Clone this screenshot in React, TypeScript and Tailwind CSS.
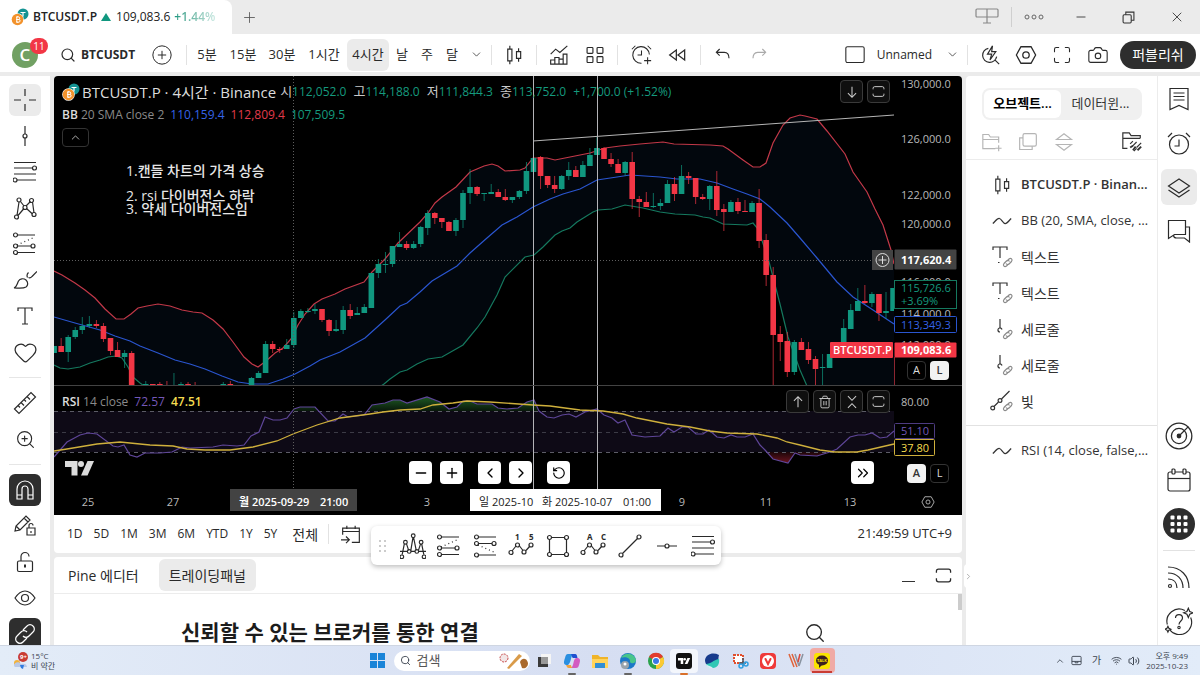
import React from "react";
import {
    Camera,
    ChevronDown,
    ChevronLeft,
    ChevronRight,
    ChevronUp,
    ChevronsRight,
    Heart,
    Maximize,
    Minus,
    Plus,
    RotateCcw,
    Search,
    Trash2,
    Volume2,
    Wifi,
    X,
    ZoomIn,
} from "lucide-react";

const FONT = "font-['Open_Sans','Noto_Sans_CJK_KR',sans-serif]";
const UP = "#10977f";
const DOWN = "#f23645";

/* ---------- icons ---------- */

const Ico = ({ children, size = 24, sw = 1.2 }: { children: React.ReactNode; size?: number; sw?: number }) => (
    <svg width={size} height={size} viewBox="0 0 24 24" fill="none" stroke="currentColor" strokeWidth={sw} aria-hidden="true" className="shrink-0">
        {children}
    </svg>
);

// a small hollow handle used by the drawing-tool icons
const Dot = ({ x, y, r = 2 }: { x: number; y: number; r?: number }) => <circle cx={x} cy={y} r={r} />;

const CrossIcon = () => <Ico><path d="M12 1v7M12 16v7M1 12h7M16 12h7" /></Ico>;
const VLineIcon = () => <Ico><path d="M12 2v8M12 14v8" /><Dot x={12} y={12} /></Ico>;
const FibIcon = () => (
    <Ico>
        <path d="M1 2.500h22M1 8h18.500M1 14h22M4 20h19" />
        <Dot x={21.5} y={8} />
        <Dot x={2} y={20} />
    </Ico>
);
const PatternIcon = () => (
    <Ico>
        <path d="M4 19.500 6 6M7.500 5.500 11 10M13 10l4.500-4.500M19.500 6l1.500 11M5 19.500l6-7M19.500 18 13.500 12.500" />
        <Dot x={6} y={4} />
        <Dot x={18.5} y={4.5} />
        <Dot x={12} y={11.5} />
        <Dot x={3.5} y={21} />
        <Dot x={21} y={18.5} />
    </Ico>
);
const LongIcon = () => (
    <Ico>
        <path d="M4 3h18M4 14h14M4 20.500h18" />
        <path d="M4 13 22 5" strokeDasharray="1 3" />
        <Dot x={2.5} y={3} />
        <Dot x={2.5} y={14} />
        <Dot x={20} y={14} />
        <Dot x={2.5} y={20.5} />
    </Ico>
);
const ShortIcon = () => (
    <Ico>
        <path d="M4 3h18M4 9.500h14M4 21h18" />
        <path d="M4 11l18 8" strokeDasharray="1 3" />
        <Dot x={2.5} y={3} />
        <Dot x={2.5} y={9.5} />
        <Dot x={20} y={9.5} />
        <Dot x={2.5} y={21} />
    </Ico>
);
const BrushIcon = () => (
    <Ico>
        <path d="M1 20c3-1 3-4 4.500-7 1.500-2.500 5-3 7.500-1 2.500 2.500 2 5.500 0 7-3 2-8 1-12 1zM14.500 9.500c-1-2 0-4 1-5M15.500 9.500c2 1 3-.5 4-1.500l4.500-4.500" />
    </Ico>
);
const TextIcon = () => <Ico><path d="M5 7V4h14v3M12 4v16M9 20h6" /></Ico>;
const RulerIcon = () => (
    <Ico>
        <path d="M1.500 18 18 1.500 22.500 6 6 22.500zM5 14.500l2 2M8 11.500l3 3M11 8.500l2 2M14 5.500l3 3" />
    </Ico>
);
const MagnetIcon = () => (
    <Ico>
        <path d="M4 21V11a8 8 0 0 1 16 0v10h-5V11a3 3 0 0 0-6 0v10zM4 17h5M15 17h5" />
    </Ico>
);
const PencilLockIcon = () => (
    <Ico>
        <path d="M2 17l1-5L13 2l4 4L7 16zM11 4l4 4M3 12l4 4M14 14h8v7h-8zM16 14v-2.500a2 2 0 0 1 4 0M18 17v2" />
    </Ico>
);
const UnlockIcon = () => (
    <Ico>
        <rect x="4.500" y="11" width="15" height="10.500" rx="1.500" />
        <path d="M8 11V6.500a4 4 0 0 1 8 0" />
        <path d="M12 14.500v3" strokeWidth={2} />
    </Ico>
);
const EyeIcon = () => (
    <Ico>
        <path d="M2 12c3-4.500 6-7 10-7s7 2.500 10 7c-3 4.500-6 7-10 7s-7-2.500-10-7z" />
        <circle cx="12" cy="12" r="3.500" />
    </Ico>
);
const LinkIcon = () => (
    <Ico sw={1.2}>
        <path d="M10 8l4-4a4 4 0 0 1 6 0 4 4 0 0 1 0 6l-4 4a4 4 0 0 1-6 0M14 16l-4 4a4 4 0 0 1-6 0 4 4 0 0 1 0-6l4-4a4 4 0 0 1 6 0" />
    </Ico>
);
const CandlesIcon = () => (
    <Ico size={20} sw={1.4}>
        <path d="M4.500 5h5v14h-5zM7 1v4M7 19v4M15 8h5v8h-5zM17.500 4v4M17.500 16v4" />
    </Ico>
);
const IndicatorsIcon = () => (
    <Ico size={20} sw={1.4}>
        <path d="M2 23v-5h5v5zM7 23v-8h5v8zM12 23v-6h5v6zM17 23V11h4.500v12zM2 11l6-6 5 4 9-8" />
    </Ico>
);
const GridIcon = () => (
    <Ico size={20} sw={1.4}>
        <rect x="2.500" y="3" width="7" height="7" rx="1" />
        <rect x="14.500" y="3" width="7" height="7" rx="1" />
        <rect x="2.500" y="14" width="7" height="7" rx="1" />
        <rect x="14.500" y="14" width="7" height="7" rx="1" />
    </Ico>
);
const ClockIcon = ({ plus = false, size = 24 }: { plus?: boolean; size?: number }) => (
    <Ico size={size}>
        {plus ? (
            <path d="M21 12a9.500 9.500 0 1 0-9 10M19 15v8M15 19h8M7.500 12.500H12V7.500" />
        ) : (
            <>
                <circle cx="12" cy="13.500" r="9.500" />
                <path d="M7.500 15H12V8.500" />
            </>
        )}
        <path d="M1 6l4-4M23 6l-4-4" />
    </Ico>
);
const RewindIcon = () => <Ico size={20} sw={1.5}><path d="M10 6v12l-8-6zM20 6v12l-8-6z" /></Ico>;
const UndoIcon = () => <Ico size={16} sw={1.7}><path d="M7 3 2 8l5 5M2 8h12c5 0 7 4 7 9" /></Ico>;
const RedoIcon = () => <Ico size={16} sw={1.7}><path d="M17 3l5 5-5 5M22 8H10c-5 0-7 4-7 9" /></Ico>;
const QuickSearchIcon = () => (
    <Ico size={20} sw={1.4}>
        <path d="M10 4a8.500 8.500 0 1 0 10 10M17.500 17.500 23 23M15 1 9 11h5l-2 7 7-10h-5z" />
    </Ico>
);
const HexIcon = ({ size = 22 }: { size?: number }) => (
    <Ico size={size} sw={1.4}>
        <path d="M1.500 12 6.500 3h11l5 9-5 9h-11z" />
        <circle cx="12" cy="12" r="3.500" />
    </Ico>
);
const FullIcon = ({ size = 14 }: { size?: number }) => (
    <Ico size={size} sw={1.8}>
        <path d="M2 8V6a3 3 0 0 1 3-3h14a3 3 0 0 1 3 3v2M2 16v2a3 3 0 0 0 3 3h14a3 3 0 0 0 3-3v-2" />
    </Ico>
);
const WaveIcon = () => <Ico size={20} sw={1.5}><path d="M1 15c4-4 6-7 8-6 3 1 4 6 7 6 2 0 4-3 7-6" /></Ico>;
const LayersIcon = () => <Ico><path d="M12 4 1.500 11 12 18l10.500-7zM1.500 15 12 22l10.500-7" /></Ico>;
const NotesIcon = () => <Ico><path d="M3 1.500h18v21l-9-4-9 4zM6.500 6h11M6.500 9.500h11M6.500 13h11" /></Ico>;
const ChatIcon = () => (
    <Ico><path d="M1.500 1.500h17v14h-11l-6 4zM18.500 8h4v15l-5-4h-8c-2 0-3-1-3-3" /></Ico>
);
const RadarIcon = () => (
    <Ico size={28} sw={1.1}>
        <circle cx="12" cy="12" r="11" />
        <circle cx="12" cy="12" r="6.500" />
        <path d="m12 12 8-8" />
        <circle cx="12" cy="12" r="1.500" fill="currentColor" />
    </Ico>
);
const CalendarIcon = () => (
    <Ico>
        <rect x="1" y="4" width="22" height="19" rx="2" />
        <path d="M1 10.500h22" />
        <rect x="5" y="1" width="3" height="5" rx="1" className="fill-white" />
        <rect x="16" y="1" width="3" height="5" rx="1" className="fill-white" />
    </Ico>
);
const GotoIcon = () => (
    <Ico size={20} sw={1.4}><path d="M2 13V5h20v17h-9M2 9h20M7 2v4M17 2v4M0 19h10M6 15l4 4-4 4" /></Ico>
);
const FeedIcon = () => (
    <Ico>
        <circle cx="3" cy="21" r="1.500" />
        <path d="M1 14c6 0 9 4 9 9M1 8c9 0 15 6 15 15M1 2c13 0 21 9 21 21" />
    </Ico>
);
const HelpIcon = () => (
    <Ico size={28} sw={1}>
        <path d="M17 3A10.500 10.500 0 0 0 2 15M4 19.500A10.500 10.500 0 0 0 22 9M20 1l1.200 2.800L24 5l-2.800 1.200L20 9l-1.200-2.800L16 5l2.800-1.200zM2.500 16.500l.8 1.700 1.700.8-1.700.8-.8 1.700-.8-1.700L0 19l1.700-.8z" />
        <path d="M9 9.500c0-4 6-4 6 0 0 2.500-3 2.500-3 5.500" />
        <circle cx="12" cy="17.500" r="1" />
    </Ico>
);
const ElliottIcon = ({ a, b }: { a: string; b: string }) => (
    <svg width="28" height="30" viewBox="0 0 28 30" fill="none" stroke="currentColor" strokeWidth="1.200" aria-hidden="true" className="overflow-visible">
        <path d="m4 20 4-5M11.500 15l3.500 4.500M18 19.500l4-4.500" />
        <Dot x={3} y={21.5} />
        <Dot x={9.5} y={14} />
        <Dot x={16} y={21} />
        <Dot x={23} y={14} />
        <text x="7" y="9" className="text-[8px] font-bold" fill="currentColor" stroke="none">{a}</text>
        <text x="21" y="9" className="text-[8px] font-bold" fill="currentColor" stroke="none">{b}</text>
    </svg>
);
const HeadShouldersIcon = () => (
    <Ico size={26} sw={1.1}>
        <path d="M2 20 4 10M6 10l2 6M10 16l2-12M12.500 4l2.500 12M17 16l2-6M20 10l2 10M0 17h7M10 17h4M17 17h7" />
        <Dot x={1.7} y={22} r={1.7} />
        <Dot x={5} y={8.5} r={1.7} />
        <Dot x={8.5} y={17} r={1.7} />
        <Dot x={12.2} y={2.5} r={1.7} />
        <Dot x={15.5} y={17} r={1.7} />
        <Dot x={19.5} y={8.5} r={1.7} />
        <Dot x={22.2} y={22} r={1.7} />
    </Ico>
);
const RectIcon = () => (
    <Ico>
        <path d="M5 3.500h14M5 20.500h14M3.500 5v14M20.500 5v14" />
        <Dot x={3.5} y={3.5} />
        <Dot x={20.5} y={3.5} />
        <Dot x={3.5} y={20.5} />
        <Dot x={20.5} y={20.5} />
    </Ico>
);
const TrendIcon = () => <Ico><path d="M4.500 19.500l15-15" /><Dot x={3} y={21} /><Dot x={21} y={3} /></Ico>;
const HLineIcon = () => <Ico><path d="M2 12h8M14 12h8" /><Dot x={12} y={12} /></Ico>;

const PairLogo = () => (
    <svg width="18" height="18" viewBox="0 0 18 18" aria-hidden="true" className="shrink-0">
        <circle cx="12" cy="6" r="5.500" fill="#149393" />
        <path d="M9.500 4.500h5M12 4.500v4" stroke="#fff" strokeWidth="1.200" />
        <circle cx="6.500" cy="11.500" r="6.300" className="fill-white" />
        <circle cx="6.500" cy="11.500" r="5.800" fill="#f2922c" />
        <path d="M5 9h2.500a1.200 1.200 0 0 1 0 2.500H5.500h2.300a1.300 1.300 0 0 1 0 2.600H5M5.800 9v5M6.800 8v1M6.800 14v1" fill="none" stroke="#fff" strokeWidth="1" />
    </svg>
);

// placed with its top left corner at the origin, 29 x 14
const TvMark = () => (
    <>
        <path d="M0 0h12.500v14.500h-6V6H0z" />
        <circle cx="16" cy="3" r="3" />
        <path d="M22.500 0H29l-6.500 14.500H16z" />
    </>
);

/* ---------- chart data ---------- */

const STEP = 7.05;
const X0 = 533.5;

// [bar index, up?, body top, body bottom, high, low] in chart units
const CANDLES: [number, number, number, number, number, number][] = [
    [-68, 1, 346, 353, 346, 353], [-67, 0, 346, 352, 338, 352], [-66, 1, 337, 352, 335, 362], [-65, 1, 330, 337, 327, 339],
    [-64, 1, 326, 330, 317, 334], [-63, 1, 324, 326, 316, 328], [-62, 0, 324, 326, 320, 328], [-61, 0, 326, 339, 323, 342],
    [-60, 0, 338, 351, 338, 355], [-59, 0, 350, 357, 342, 357], [-58, 1, 353, 357, 350, 368], [-57, 0, 353, 385, 351, 385],
    [-55, 1, 384, 385, 381, 385], [-54, 0, 384, 385, 384, 385], [-53, 0, 384, 385, 382, 385], [-52, 0, 385, 385, 381, 385],
    [-51, 1, 385, 385, 373, 385], [-50, 1, 384, 385, 382, 385], [-49, 0, 384, 385, 382, 385], [-48, 0, 385, 385, 382, 385],
    [-44, 1, 384, 385, 382, 385], [-43, 0, 384, 385, 381, 385], [-40, 1, 378, 385, 377, 385], [-39, 1, 373, 378, 371, 378],
    [-38, 1, 344, 373, 341, 373], [-37, 0, 344, 349, 341, 353], [-36, 0, 349, 350, 347, 353], [-35, 1, 345, 349, 339, 349],
    [-34, 1, 318, 345, 312, 348], [-33, 1, 311, 318, 309, 318], [-32, 1, 311, 312, 308, 313], [-31, 1, 309, 311, 304, 314],
    [-30, 0, 309, 320, 309, 322], [-29, 0, 320, 331, 319, 336], [-28, 1, 329, 331, 320, 332], [-27, 1, 310, 330, 306, 334],
    [-26, 0, 310, 316, 304, 319], [-25, 1, 313, 315, 307, 315], [-24, 1, 307, 313, 304, 313], [-23, 1, 273, 308, 273, 308],
    [-22, 1, 264, 273, 259, 278], [-21, 1, 264, 265, 252, 273], [-20, 1, 246, 264, 246, 267], [-19, 1, 244, 247, 232, 247],
    [-18, 0, 244, 248, 241, 250], [-17, 1, 244, 248, 241, 249], [-16, 1, 227, 244, 226, 247], [-15, 1, 213, 228, 210, 235],
    [-14, 0, 213, 218, 212, 224], [-13, 0, 218, 222, 218, 228], [-12, 0, 222, 231, 221, 231], [-11, 1, 220, 231, 218, 236],
    [-10, 1, 193, 220, 190, 228], [-9, 1, 187, 193, 169, 204], [-8, 0, 187, 194, 186, 196], [-7, 1, 193, 194, 193, 201],
    [-6, 1, 192, 194, 184, 194], [-5, 0, 192, 197, 189, 197], [-4, 0, 197, 200, 189, 201], [-3, 1, 197, 200, 197, 203],
    [-2, 1, 191, 197, 190, 199], [-1, 1, 171, 191, 162, 194], [0, 1, 158, 172, 141, 172], [1, 0, 157, 176, 156, 189],
    [2, 0, 176, 185, 176, 188], [3, 0, 185, 189, 176, 193], [4, 1, 176, 189, 175, 190], [5, 1, 170, 176, 162, 180],
    [6, 0, 170, 177, 166, 177], [7, 1, 165, 177, 161, 177], [8, 1, 155, 166, 148, 166], [9, 1, 148, 155, 137, 155],
    [10, 0, 148, 159, 147, 159], [11, 0, 159, 164, 153, 167], [12, 0, 164, 173, 159, 173], [13, 1, 162, 173, 161, 176],
    [14, 0, 162, 199, 152, 209], [15, 0, 199, 202, 196, 217], [16, 0, 202, 207, 192, 207], [17, 1, 206, 207, 193, 208],
    [18, 1, 203, 206, 199, 210], [19, 1, 184, 203, 180, 203], [20, 0, 184, 194, 177, 201], [21, 1, 176, 194, 165, 194],
    [22, 0, 176, 178, 172, 184], [23, 0, 178, 197, 178, 204], [24, 0, 197, 199, 194, 200], [25, 1, 186, 199, 185, 210],
    [26, 0, 186, 210, 171, 216], [27, 0, 209, 212, 204, 231], [28, 1, 202, 212, 200, 212], [29, 0, 202, 211, 198, 214],
    [30, 0, 211, 212, 200, 212], [31, 1, 203, 212, 201, 212], [32, 0, 203, 241, 189, 248], [33, 0, 240, 275, 234, 286],
    [34, 0, 275, 335, 267, 385], [35, 0, 334, 342, 326, 361], [36, 0, 341, 372, 332, 377], [37, 1, 342, 372, 340, 375],
    [38, 0, 342, 350, 338, 350], [39, 0, 349, 360, 342, 364], [40, 0, 359, 369, 356, 385], [41, 1, 367, 368, 354, 385],
    [42, 1, 354, 368, 354, 368], [43, 1, 342, 354, 342, 358], [44, 1, 328, 342, 319, 342], [45, 1, 310, 329, 304, 329],
    [46, 1, 301, 311, 288, 311], [47, 0, 301, 303, 285, 304], [48, 1, 294, 303, 292, 307], [49, 0, 294, 313, 294, 321],
    [50, 1, 311, 313, 292, 319], [51, 1, 288, 311, 288, 311],
];

const UPPER =
    "54,271 62,275 75,283 85,290 95,298 105,309 116,319 124,319 131,314 138,308 147,306 158,304 170,306 182,310 193,312 202,313 213,320 223,329 233,342 244,357 252,364 258,367 266,361 275,353 283,348 291,339 298,325 305,314 314,304 322,299 335,294 345,289 364,282 372,272 385,259 398,243 420,222 428,213 435,203 442,197 456,187 470,172 484,166 492,164 498,166 505,171 520,170 525,168 533,158 547,158 555,160 570,157 590,153 605,148 620,146 640,144 663,142 674,144 710,145 723,146 728,149 743,160 753,167 760,167 766,163 773,143 783,125 790,118 800,115 805,116 817,119 827,131 845,154 853,172 867,192 875,209 883,225 891,250 894,264";
const MIDDLE =
    "54,317 75,323 100,330 115,336 130,341 140,346 158,353 175,360 190,364 205,369 222,376 238,382 252,384 268,384 283,379 295,374 310,366 320,360 340,352 365,338 385,320 400,306 407,303 420,292 432,281 457,266 470,253 487,238 502,225 517,217 533,207 550,199 563,194 580,189 597,180 617,177 630,175 660,177 677,179 700,179 717,183 733,189 747,194 760,199 770,207 787,223 800,238 817,258 837,282 853,297 870,308 894,324";
const LOWER =
    "54,365 60,368 68,369 80,367 90,363 100,360 108,357 116,356 122,358 128,367 133,377 140,383 150,390 372,392 384,384 390,379 400,372 407,370 417,364 428,359 442,357 463,345 477,328 485,317 497,295 505,277 525,257 534,255 543,247 555,235 562,231 570,228 577,222 593,212 598,210 612,209 625,205 643,208 660,212 675,214 695,215 703,217 710,218 723,224 747,225 753,223 758,229 768,258 773,277 780,304 788,337 800,370 807,386 820,400 894,410";
const RSI =
    "54,457 61,449 67,442 80,435 88,433 97,434 113,446 118,447 124,445 130,455 137,457 145,453 160,453 172,452 182,447 190,448 213,447 223,445 237,446 244,445 251,436 259,432 265,417 273,420 280,420 287,418 294,409 300,407 315,407 328,421 335,421 343,414 348,417 364,415 372,405 385,403 393,400 400,400 407,403 427,397 440,402 449,409 457,407 463,401 470,401 477,404 492,404 498,408 507,409 518,408 527,402 534,400 539,411 547,417 554,418 562,415 569,414 576,417 585,412 597,409 604,415 612,418 618,423 625,420 632,435 645,437 660,436 668,428 674,432 682,427 688,427 696,434 703,434 709,430 717,437 724,438 731,435 737,437 745,437 753,434 760,445 765,450 773,459 788,463 795,453 800,455 817,456 830,452 837,449 850,437 858,435 865,435 872,433 880,438 887,437 894,431";
const RSI_MA =
    "54,451 67,449 97,444 120,442 150,445 173,446 187,449 205,450 230,450 253,447 277,441 293,434 317,425 340,418 370,414 383,412 400,410 420,409 433,405 453,403 467,401 490,402 533,405 550,406 580,410 603,411 623,414 637,418 667,424 690,427 710,431 727,433 757,434 777,438 787,442 800,445 820,450 835,452 857,452 868,450 894,444";

const PRICE_TICKS = [
    { y: 84, label: "130,000.0" },
    { y: 139, label: "126,000.0" },
    { y: 195, label: "122,000.0" },
    { y: 224, label: "120,000.0" },
    { y: 282, label: "116,000.0" },
    { y: 314, label: "114,000.0" },
    { y: 345, label: "112,000.0" },
];

const DAY_TICKS = [
    { x: 88, label: "25" },
    { x: 173, label: "27" },
    { x: 427, label: "3" },
    { x: 682, label: "9" },
    { x: 766, label: "11" },
    { x: 850, label: "13" },
];

type TagProps = { x?: number; y: number; w?: number; h: number; fill: string; stroke?: string; color: string; label: string; bold?: boolean };
const Tag = ({ x = 894, y, w = 63, h, fill, stroke = "none", color, label, bold }: TagProps) => (
    <g>
        <rect x={x + 0.5} y={y + 0.5} width={w - 1} height={h - 1} rx="1" fill={fill} stroke={stroke} />
        <text x={x + 7} y={y + h / 2 + 4} fill={color} className={bold ? "text-[11px] font-bold" : "text-[11px]"}>
            {label}
        </text>
    </g>
);

const PlotCanvas = () => (
    <svg viewBox="54 76 908 439" preserveAspectRatio="xMinYMin meet" className={`block h-full w-full ${FONT}`} role="img" aria-label="BTCUSDT.P 4시간">
        <defs>
            <clipPath id="price"><rect x="54" y="76" width="840" height="309" /></clipPath>
            <clipPath id="over"><rect x="54" y="386" width="840" height="25" /></clipPath>
            <clipPath id="under"><rect x="700" y="452" width="194" height="37" /></clipPath>
            <linearGradient id="overFill" gradientUnits="userSpaceOnUse" x1="0" y1="396" x2="0" y2="411">
                <stop offset="0" stopColor="#205f26" />
                <stop offset="1" stopColor="#08170a" />
            </linearGradient>
            <linearGradient id="underFill" gradientUnits="userSpaceOnUse" x1="0" y1="452" x2="0" y2="463">
                <stop offset="0" stopColor="#1c0609" />
                <stop offset="1" stopColor="#6a131e" />
            </linearGradient>
        </defs>

        <g clipPath="url(#price)">
            <polygon points={`${UPPER} ${LOWER.split(" ").reverse().join(" ")}`} fill="#02070d" />
            <g fill="none" strokeWidth="1.200">
                <polyline points={UPPER} stroke="#c23848" />
                <polyline points={LOWER} stroke="#15795f" />
                <polyline points={MIDDLE} stroke="#2a55cf" />
            </g>
            {CANDLES.map(([k, up, top, bottom, high, low]) => {
                const x = X0 + k * STEP;
                const color = up ? UP : DOWN;
                return (
                    <g key={k} fill={color}>
                        <rect x={x - 0.5} y={high} width="1" height={low - high} opacity="0.7" />
                        <rect x={x - 2.8} y={top} width="5.600" height={Math.max(bottom - top, 1)} />
                    </g>
                );
            })}
            <path d="M533 141 894 115" stroke="#b5b5b5" fill="none" />
        </g>

        <rect x="54" y="411" width="840" height="41" fill="#0e0a16" />
        <polygon clipPath="url(#over)" points={`54,411 ${RSI} 894,411`} fill="url(#overFill)" />
        <polygon clipPath="url(#under)" points={`54,452 ${RSI} 894,452`} fill="url(#underFill)" />
        <g stroke="#5c5c66" strokeDasharray="4 4">
            <path d="M54 411.500H894" />
            <path d="M54 432.500H894" opacity="0.6" />
            <path d="M54 452.500H894" />
        </g>
        <polyline points={RSI} fill="none" stroke="#5f4699" strokeWidth="1.200" />
        <polyline points={RSI_MA} fill="none" stroke="#cfb03c" strokeWidth="1.300" />

        <g stroke="#5e5e5e" strokeDasharray="1 2">
            <path d="M293.500 76V489" />
            <path d="M54 260.500H872" />
        </g>
        <path d="M533.500 76V489M597.500 76V489" stroke="#b4b4b8" />
        <path d="M54 385.500H962" stroke="#434343" />
        <path d="M894.500 357V385" stroke="#8c2530" />

        {PRICE_TICKS.map((t) => (
            <text key={t.label} x="901" y={t.y + 4} fill="#b9b9b9" className="text-[11px]">{t.label}</text>
        ))}
        <Tag y={249} h={21} fill="#434343" color="#fff" label="117,620.4" bold />
        <rect x="872" y="250" width="21" height="20" fill="#434343" />
        <path d="M882.500 256v8M878.500 260h8" stroke="#ddd" />
        <circle cx="882.500" cy="260" r="6.500" stroke="#ddd" fill="none" />
        <g>
            <rect x="894.500" y="280.500" width="62" height="28" fill="#000" stroke="#15795f" />
            <text x="901" y="292" fill="#159a7e" className="text-[11px]">115,726.6</text>
            <text x="901" y="305" fill="#159a7e" className="text-[11px]">+3.69%</text>
        </g>
        <Tag y={316} h={17} fill="#000" stroke="#2a55cf" color="#3563e8" label="113,349.3" />
        <rect x="830" y="342" width="63" height="16" rx="1" fill={DOWN} />
        <text x="833" y="354" fill="#fff" className="text-[11px] font-semibold">BTCUSDT.P</text>
        <Tag y={342} h={16} fill={DOWN} color="#fff" label="109,083.6" bold />
        <text x="901" y="406" fill="#b9b9b9" className="text-[11px]">80.00</text>
        <Tag y={423} w={41} h={16} fill="#000" stroke="#4d3b80" color="#7458b8" label="51.10" />
        <Tag y={439} w={41} h={17} fill="#000" stroke="#cfb03c" color="#f5dc4f" label="37.80" />

        <g transform="translate(65 461)" fill="#dcdcdc"><TvMark /></g>

        {DAY_TICKS.map((t) => (
            <text key={t.label} x={t.x} y="506" textAnchor="middle" fill="#b9b9b9" className="text-[11px]">{t.label}</text>
        ))}
        <rect x="230" y="489" width="127" height="22" fill="#434343" />
        <text x="239" y="506" fill="#fff" className="text-[11px] font-semibold">월 2025-09-29</text>
        <text x="320" y="506" fill="#fff" className="text-[11px] font-semibold">21:00</text>
        <rect x="470" y="489" width="191" height="22" fill="#fff" />
        <text x="479" y="506" fill="#222" className="text-[11px]">일 2025-10</text>
        <text x="542" y="506" fill="#222" className="text-[11px]">화 2025-10-07</text>
        <text x="623" y="506" fill="#222" className="text-[11px]">01:00</text>
    </svg>
);

/* ---------- shell pieces ---------- */

const Divider = () => <span className="mx-1 h-5 w-px shrink-0 bg-[#e2e2e2]" />;

const BarButton = ({ label, width, children }: { label: string; width: string; children: React.ReactNode }) => (
    <button aria-label={label} className={`flex h-8 shrink-0 items-center justify-center rounded-md ${width}`}>
        {children}
    </button>
);

const TitleBar = () => (
    <header className="flex h-[34px] shrink-0 items-center bg-[#ebebeb] text-[#555]">
        <div className="flex h-full w-[232px] items-center gap-1 rounded-tr-lg bg-white pl-[11px] text-[12px] text-[#222]">
            <PairLogo />
            <span className="font-semibold">BTCUSDT.P</span>
            <svg width="10" height="8" viewBox="0 0 10 8" aria-hidden="true"><path d="M5 0l5 8H0z" fill={UP} /></svg>
            <span className="ml-px">109,083.6</span>
            <span className="bg-gradient-to-r from-[#10977f] to-[#c5e6df] bg-clip-text font-semibold text-transparent">+1.44%</span>
        </div>
        <button aria-label="새 탭" className="ml-2 flex size-[18px] items-center justify-center"><Plus size={17} strokeWidth={1.2} /></button>
        <div className="ml-auto flex items-center text-[#333]">
            <button aria-label="레이아웃" className="text-[#888]">
                <Ico><rect x="1" y="4" width="22" height="8" rx="1" /><path d="M12 4v14M8 18h8" /></Ico>
            </button>
            <span className="mx-3 h-5 w-px bg-[#cfcfcf]" />
            <button aria-label="메뉴" className="w-5">
                <svg width="20" height="6" viewBox="0 0 20 6" fill="none" stroke="#666" aria-hidden="true">
                    <circle cx="3" cy="3" r="2" /><circle cx="10" cy="3" r="2" /><circle cx="17" cy="3" r="2" />
                </svg>
            </button>
            <button aria-label="최소화" className="flex w-[74px] justify-center"><Minus size={14} strokeWidth={1.5} /></button>
            <button aria-label="복원" className="flex w-[20px] justify-center">
                <Ico size={13} sw={2}><rect x="2" y="7" width="15" height="15" rx="2" /><path d="M7 7V2h15v15h-5" /></Ico>
            </button>
            <button aria-label="닫기" className="ml-4 flex w-[46px] justify-center"><X size={16} strokeWidth={1.3} /></button>
        </div>
    </header>
);

const INTERVALS = [
    { label: "5분", width: "w-8" },
    { label: "15분", width: "w-10" },
    { label: "30분", width: "w-[38px]" },
    { label: "1시간", width: "w-[46px]" },
    { label: "4시간", width: "w-[42px] bg-[#ebebeb]" },
    { label: "날", width: "w-[26px]" },
    { label: "주", width: "w-[24px]" },
    { label: "달", width: "w-[26px]" },
];

const TopToolbar = () => (
    <div className="mb-1 flex h-[38px] shrink-0 items-center bg-white pt-[3px] text-[13px] text-[#2a2a2a]">
        <div className="relative ml-3 size-[26px] shrink-0 rounded-full bg-[#71a063] text-center text-[17px] leading-[25px] font-semibold text-white">
            C
            <span className="absolute -top-1 left-[18px] h-4 w-[18px] rounded-full bg-[#f23645] text-[10px] leading-4 font-normal">11</span>
        </div>
        <button className="ml-[22px] flex w-[82px] items-center gap-[5px] text-[12px] font-bold"><Search size={16} strokeWidth={1.8} className="shrink-0" />BTCUSDT</button>
        <BarButton label="심볼 비교" width="w-10">
            <Ico size={20}><circle cx="12" cy="12" r="11" /><path d="M12 7v10M7 12h10" /></Ico>
        </BarButton>
        <Divider />
        {INTERVALS.map((i) => (
            <button key={i.label} className={`h-8 shrink-0 rounded-md text-[13px] ${i.width}`}>{i.label}</button>
        ))}
        <BarButton label="인터벌 더보기" width="w-[22px]"><ChevronDown size={13} strokeWidth={1.4} /></BarButton>
        <Divider />
        <BarButton label="캔들" width="w-9"><CandlesIcon /></BarButton>
        <Divider />
        <BarButton label="지표" width="w-9"><IndicatorsIcon /></BarButton>
        <BarButton label="템플릿" width="w-9"><GridIcon /></BarButton>
        <Divider />
        <BarButton label="알림" width="w-[38px]"><ClockIcon plus size={21} /></BarButton>
        <BarButton label="리플레이" width="w-9"><RewindIcon /></BarButton>
        <Divider />
        <BarButton label="실행 취소" width="w-9"><UndoIcon /></BarButton>
        <BarButton label="다시 실행" width="w-9"><span className="text-[#aaa]"><RedoIcon /></span></BarButton>

        <div className="ml-auto flex items-center">
            <BarButton label="레이아웃" width="w-9"><Ico size={20} sw={1.3}><rect x="1" y="2" width="22" height="19" rx="2" /></Ico></BarButton>
            <button className="ml-1 flex items-center gap-[14px] text-[12px] font-medium">Unnamed <ChevronDown size={13} strokeWidth={1.4} /></button>
            <span className="mr-1 ml-2 h-5 w-px bg-[#e2e2e2]" />
            <BarButton label="빠른 검색" width="w-9"><QuickSearchIcon /></BarButton>
            <BarButton label="설정" width="w-9"><HexIcon /></BarButton>
            <BarButton label="전체 화면" width="w-9"><Maximize size={20} strokeWidth={1.3} /></BarButton>
            <BarButton label="스냅샷" width="w-9"><Camera size={22} strokeWidth={1.2} /></BarButton>
            <button className="mr-1 ml-1 h-7 w-[76px] rounded-full bg-[#2e2e2e] text-[14px] text-white">퍼블리쉬</button>
        </div>
    </div>
);

const TOOLS = [
    { label: "십자선", icon: <CrossIcon />, cls: "bg-[#ebebeb]" },
    { label: "추세선", icon: <VLineIcon />, cls: "" },
    { label: "피보나치", icon: <FibIcon />, cls: "" },
    { label: "패턴", icon: <PatternIcon />, cls: "" },
    { label: "예측", icon: <LongIcon />, cls: "" },
    { label: "브러쉬", icon: <BrushIcon />, cls: "" },
    { label: "문자", icon: <TextIcon />, cls: "" },
    { label: "아이콘", icon: <Heart size={25} strokeWidth={1.2} />, cls: "" },
    null,
    { label: "측정", icon: <RulerIcon />, cls: "" },
    { label: "확대", icon: <ZoomIn size={21} strokeWidth={1.3} />, cls: "" },
    null,
    { label: "자석", icon: <MagnetIcon />, cls: "bg-[#2e2e2e] text-white" },
    { label: "드로잉 모드", icon: <PencilLockIcon />, cls: "" },
    { label: "잠금", icon: <UnlockIcon />, cls: "" },
    { label: "숨기기", icon: <EyeIcon />, cls: "" },
    { label: "링크", icon: <LinkIcon />, cls: "bg-[#2e2e2e] text-white" },
];

const DrawingBar = () => (
    <nav className="flex w-[50px] shrink-0 flex-col items-center gap-1 overflow-hidden bg-white pt-2 text-[#2a2a2a]">
        {TOOLS.map((t, i) =>
            t ? (
                <button key={t.label} aria-label={t.label} className={`flex size-8 shrink-0 items-center justify-center rounded-md ${t.cls}`}>
                    {t.icon}
                </button>
            ) : (
                <span key={i} className="my-[5px] h-px w-8 shrink-0 bg-[#e6e6e6]" />
            ),
        )}
    </nav>
);

const OHLC = [
    ["시", "112,052.0"],
    ["고", "114,188.0"],
    ["저", "111,844.3"],
    ["종", "113,752.0"],
];

const PaneButton = ({ label, children }: { label: string; children: React.ReactNode }) => (
    <button aria-label={label} className="flex size-[23px] items-center justify-center rounded border border-[#3a3a3a] bg-[#0f0f0f] text-[#ccc]">
        {children}
    </button>
);

const WhiteButton = ({ label, children }: { label: string; children: React.ReactNode }) => (
    <button aria-label={label} className="flex size-[23px] items-center justify-center rounded bg-white text-black">
        {children}
    </button>
);

const ScaleButtons = ({ active }: { active: "A" | "L" }) => (
    <div className="flex gap-1 text-[11px]">
        {["A", "L"].map((s) => (
            <button key={s} className={s === active ? "size-[19px] rounded bg-[#f2f2f2] font-semibold text-[#333]" : "size-[19px] rounded border border-[#333] text-[#ddd]"}>
                {s}
            </button>
        ))}
    </div>
);

const ChartArea = () => (
    <section className="relative min-h-0 flex-1 overflow-hidden rounded-t bg-black">
        <PlotCanvas />

        <div className="absolute top-[6px] left-2 text-[12px] text-[#c9c9c9]">
            <div className="flex h-5 items-center whitespace-nowrap">
                <PairLogo />
                <h1 className="ml-[2px] text-[15px] text-[#dcdcdc]">BTCUSDT.P · 4시간 · Binance</h1>
                <p className="ml-1 flex gap-[7px] text-[12px] text-[#159a7e]">
                    {OHLC.map(([k, v]) => (
                        <span key={k}><span className="text-[13px] text-[#c9c9c9]">{k}</span>{v}</span>
                    ))}
                    <span className="self-center">+1,700.0 (+1.52%)</span>
                </p>
            </div>
            <p className="mt-1 flex gap-[6px] leading-[18px]">
                <span className="text-[#8a8a8a]"><b className="font-semibold text-[#dcdcdc]">BB</b> 20 SMA close 2</span>
                <span className="text-[#3563e8]">110,159.4</span>
                <span className="text-[#e03a4a]">112,809.4</span>
                <span className="text-[#159a7e]">107,509.5</span>
            </p>
            <button aria-label="접기" className="mt-1 flex h-[19px] w-[27px] items-center justify-center rounded border border-[#333]">
                <ChevronUp size={13} strokeWidth={1.6} />
            </button>
        </div>

        <div className="absolute top-[88px] left-[72px] text-[14px] leading-[13px] font-medium text-[#e6e6e6]">
            <p className="mb-3">1.캔들 차트의 가격 상승</p>
            <p>2. rsi 다이버전스 하락</p>
            <p>3. 약세 다이버전스임</p>
        </div>

        <div className="absolute top-1 right-[72px] flex gap-1">
            <PaneButton label="아래로"><Ico size={14} sw={1.8}><path d="M12 3v18M5 14l7 7 7-7" /></Ico></PaneButton>
            <PaneButton label="최대화"><FullIcon size={13} /></PaneButton>
        </div>

        <p className="absolute top-[317px] left-2 flex gap-[6px] text-[12px] leading-[18px]">
            <span className="text-[#8a8a8a]"><b className="font-semibold text-[#dcdcdc]">RSI</b> 14 close</span>
            <span className="text-[#7458b8]">72.57</span>
            <span className="font-semibold text-[#f5dc4f]">47.51</span>
        </p>
        <div className="absolute top-[314px] right-[72px] flex gap-1">
            <PaneButton label="위로"><Ico size={14} sw={1.8}><path d="M12 21V3M5 10l7-7 7 7" /></Ico></PaneButton>
            <PaneButton label="삭제"><Trash2 size={14} strokeWidth={1.6} /></PaneButton>
            <PaneButton label="접기"><Ico size={14} sw={1.8}><path d="M5 2l7 7 7-7M5 22l7-7 7 7" /></Ico></PaneButton>
            <PaneButton label="최대화"><FullIcon size={13} /></PaneButton>
        </div>

        <div className="absolute top-[285px] right-[13px]"><ScaleButtons active="L" /></div>
        <div className="absolute top-[388px] right-[13px]"><ScaleButtons active="A" /></div>

        <div className="absolute top-[385px] left-[355px] flex gap-[15px]">
            <div className="flex gap-2">
                <WhiteButton label="축소"><Minus size={16} /></WhiteButton>
                <WhiteButton label="확대"><Plus size={16} /></WhiteButton>
            </div>
            <div className="flex gap-2">
                <WhiteButton label="왼쪽"><ChevronLeft size={16} /></WhiteButton>
                <WhiteButton label="오른쪽"><ChevronRight size={16} /></WhiteButton>
            </div>
            <WhiteButton label="초기화"><RotateCcw size={14} /></WhiteButton>
        </div>
        <div className="absolute top-[385px] right-[88px]"><WhiteButton label="최근 바로 이동"><ChevronsRight size={18} strokeWidth={1.6} /></WhiteButton></div>
        <button aria-label="시간축 설정" className="absolute right-[27px] bottom-[6px] text-[#ccc]"><HexIcon size={14} /></button>
    </section>
);

const RANGES = ["1D", "5D", "1M", "3M", "6M", "YTD", "1Y", "5Y"];

const FAVOURITES = [
    { label: "헤드앤숄더", icon: <HeadShouldersIcon /> },
    { label: "롱 포지션", icon: <LongIcon /> },
    { label: "숏 포지션", icon: <ShortIcon /> },
    { label: "엘리엇 임펄스", icon: <ElliottIcon a="1" b="5" /> },
    { label: "네모", icon: <RectIcon /> },
    { label: "엘리엇 조정", icon: <ElliottIcon a="A" b="C" /> },
    { label: "빗", icon: <TrendIcon /> },
    { label: "가로줄", icon: <HLineIcon /> },
    { label: "되돌림", icon: <FibIcon /> },
];

const RangeBar = () => (
    <div className="relative flex h-[38px] shrink-0 items-center rounded-b bg-white pr-[10px] pl-[13px] text-[12px] text-[#2a2a2a]">
        <div className="flex items-center gap-[11px]">
            {RANGES.map((r) => (
                <button key={r}>{r}</button>
            ))}
            <button className="ml-1 text-[14px]">전체</button>
        </div>
        <span className="mr-3 ml-[10px] h-5 w-px bg-[#e2e2e2]" />
        <button aria-label="날짜로 가기"><GotoIcon /></button>
        <button className="ml-auto text-[13px]">21:49:59 UTC+9</button>

        {/* floating favourites */}
        <div className="absolute top-[11px] left-[317px] z-10 flex h-[39px] w-[350px] items-center rounded-md bg-white pl-1 shadow-[0_2px_5px_rgba(0,0,0,0.25)]">
            <svg width="14" height="16" viewBox="0 0 14 16" fill="#bbb" aria-hidden="true">
                {[3, 8, 13].map((y) => (
                    <g key={y}><circle cx="5" cy={y} r="1" /><circle cx="10" cy={y} r="1" /></g>
                ))}
            </svg>
            <div className="ml-[6px] flex flex-1 justify-around">
                {FAVOURITES.map((f) => (
                    <button key={f.label} aria-label={f.label} className="flex w-8 items-center justify-center">{f.icon}</button>
                ))}
            </div>
        </div>
    </div>
);

const BottomPanel = () => (
    <section className="mt-1 flex h-[88px] shrink-0 flex-col overflow-hidden rounded-t bg-white text-[#2a2a2a]">
        <div className="flex h-[37px] shrink-0 items-center border-b border-[#ececec] pr-[10px] pl-[14px] text-[14px]">
            <button>Pine 에디터</button>
            <button className="ml-5 h-8 rounded-md bg-[#ebebeb] px-[10px]">트레이딩패널</button>
            <button aria-label="최소화" className="mt-3 ml-auto h-px w-[13px] bg-[#333]" />
            <button aria-label="최대화" className="ml-5"><FullIcon size={17} /></button>
        </div>
        <div className="flex flex-1 items-start justify-between pl-[127px]">
            <h2 className="pt-[22px] text-[21px] leading-8 font-bold text-[#1c1c1c]">신뢰할 수 있는 브로커를 통한 연결</h2>
            <button aria-label="브로커 검색" className="mt-7 mr-[132px] ml-auto"><Search size={22} strokeWidth={1.5} /></button>
            <span className="h-4 w-1 bg-[#ccc]" />
        </div>
    </section>
);

const Linked = ({ kind }: { kind: "text" | "vline" | "trend" }) => (
    <svg width="24" height="24" viewBox="0 0 24 24" fill="none" stroke="#333" strokeWidth="1.200" aria-hidden="true" className="shrink-0">
        {kind === "text" && <path d="M3 5V2h14v3M10 2v11M8 17.500h1.500" />}
        {kind === "vline" && <path d="M10 2v9M8 13.500a2 2 0 0 1 4-1M8 13a2 2 0 0 0 2 2" />}
        {kind === "trend" && (
            <>
                <path d="M4 17.500l4.500-4.500M11.500 10l8-8" />
                <circle cx="2.700" cy="19" r="1.900" />
                <circle cx="10" cy="11.500" r="1.900" />
            </>
        )}
        <path d="M17 16l2-2c2-1.500 4 .5 2.500 2.500l-2.500 2.500c-1 1-2.500.5-3-.5M18.500 19l-2 2c-2 1.500-4-.5-2.500-2.500l2.500-2.500c1-1 2.500-.5 3 .5" stroke="#8a8a8a" />
    </svg>
);

const OBJECTS = [
    { icon: <CandlesIcon />, label: "BTCUSDT.P · Binance", cls: "text-[13px] font-semibold" },
    { icon: <WaveIcon />, label: "BB (20, SMA, close, 2, 0)", cls: "text-[13px]" },
    { icon: <Linked kind="text" />, label: "텍스트", cls: "text-[14px]" },
    { icon: <Linked kind="text" />, label: "텍스트", cls: "text-[14px]" },
    { icon: <Linked kind="vline" />, label: "세로줄", cls: "text-[14px]" },
    { icon: <Linked kind="vline" />, label: "세로줄", cls: "text-[14px]" },
    { icon: <Linked kind="trend" />, label: "빛", cls: "text-[14px]" },
];

const ObjectRow = ({ icon, label, cls }: { icon: React.ReactNode; label: string; cls: string }) => (
    <li className="flex h-9 items-center gap-[7px] pr-2 pl-6">
        <span className="flex w-6 justify-center">{icon}</span>
        <span className={`min-w-0 flex-1 truncate ${cls}`}>{label}</span>
    </li>
);

const ObjectTree = () => (
    <aside className="relative ml-1 flex w-[191px] shrink-0 flex-col rounded-tl bg-white pt-3 text-[#333]">
        <div className="ml-4 flex h-8 w-[160px] items-center rounded-lg bg-[#f0f0f0] p-[2px] text-[13px]">
            <button className="h-7 w-[77px] rounded-md bg-white font-semibold text-black">오브젝트...</button>
            <button className="h-7 flex-1">데이터윈...</button>
        </div>
        <div className="mt-2 flex h-[27px] items-center pr-[14px] pl-4 text-[#b5b5b5]">
            <button aria-label="그룹"><Ico size={20} sw={1.4}><path d="M16 20H1V3h7l2 3h10v7M1 9h19M20 16v7M16 19.500h7.500" /></Ico></button>
            <button aria-label="복제" className="ml-4"><Ico size={20} sw={1.4}><rect x="6" y="2" width="16" height="15" rx="2" /><path d="M6 7H2v14h15v-4" /></Ico></button>
            <button aria-label="이동" className="ml-4"><Ico size={20} sw={1.4}><path d="M3 9l9-7 9 7zM3 15l9 7 9-7z" /></Ico></button>
            <button aria-label="드로잉 관리" className="ml-auto text-[#333]">
                <Ico size={22} sw={1.3}>
                    <path d="M7 19H2V2h7l2 3h10v3M2 8h19M10 14l3-3M12 17l5-5M14 22l3-3M17 18l5-5" />
                    <path d="M10 18l3-2M13 21l3-4M18 21l4-4" strokeWidth={2} />
                </Ico>
            </button>
        </div>
        <ul className="mt-1 border-t border-[#ececec] pt-[7px]">
            {OBJECTS.map((o, i) => (
                <ObjectRow key={i} {...o} />
            ))}
        </ul>
        <ul className="mt-[6px] border-t border-[#e2e2e2] pt-[7px]">
            <ObjectRow icon={<WaveIcon />} label="RSI (14, close, false, SMA)" cls="text-[13px]" />
        </ul>
        <button aria-label="패널 접기" className="absolute bottom-[57px] -left-[2px] flex h-6 w-2 items-center justify-center rounded bg-white text-[#999]">
            <ChevronRight size={9} className="shrink-0" />
        </button>
    </aside>
);

const WidgetBar = () => (
    <nav className="flex w-[43px] shrink-0 flex-col items-center gap-2 border-l border-[#ececec] bg-white pt-[5px] pb-[6px] text-[#2a2a2a]">
        {[
            { label: "관심종목", icon: <NotesIcon />, cls: "" },
            { label: "알림", icon: <ClockIcon />, cls: "" },
            { label: "오브젝트 트리", icon: <LayersIcon />, cls: "bg-[#ebebeb]" },
            { label: "채팅", icon: <ChatIcon />, cls: "" },
        ].map((w) => (
            <button key={w.label} aria-label={w.label} className={`flex size-9 items-center justify-center rounded-md ${w.cls}`}>{w.icon}</button>
        ))}
        <button aria-label="스크리너" className="mt-auto flex size-9 items-center justify-center"><RadarIcon /></button>
        <button aria-label="캘린더" className="flex size-9 items-center justify-center"><CalendarIcon /></button>
        <button aria-label="제품" className="flex size-9 items-center justify-center">
            <svg width="32" height="32" viewBox="0 0 32 32" aria-hidden="true">
                <circle cx="16" cy="16" r="16" fill="#2e2e2e" />
                {[7.5, 14, 20.5].map((y) => [7.5, 14, 20.5].map((x) => <rect key={`${x}-${y}`} x={x} y={y} width="4" height="4" rx="1" fill="#fff" />))}
            </svg>
        </button>
        <span className="h-px w-8 bg-[#e2e2e2]" />
        <button aria-label="스트림" className="flex size-9 items-center justify-center"><FeedIcon /></button>
        <button aria-label="도움말" className="flex size-9 items-center justify-center"><HelpIcon /></button>
    </nav>
);

/* ---------- desktop taskbar ---------- */

const App16 = ({ children }: { children: React.ReactNode }) => (
    <svg width="18" height="18" viewBox="0 0 18 18" aria-hidden="true">{children}</svg>
);

const TASKS: { label: string; cls?: string; mark?: string; icon: React.ReactNode }[] = [
    { label: "작업 보기", icon: <App16><rect x="6" y="2" width="10" height="10" fill="#f5f5f5" /><rect x="3" y="5" width="10" height="10" fill="#3a3a3a" /><rect x="6" y="5" width="7" height="7" fill="#999" /></App16> },
    {
        label: "Copilot",
        mark: "bg-[#666]",
        icon: (
            <App16>
                <path d="M5 2h5c-2 2-2 9-5 11H3c-3-1-2-4-1-7 .500-2 1-4 3-4z" fill="#2b8fe0" />
                <path d="M8 2h4c2 0 2 2 2.500 4H10C9 6 9 3 8 2z" fill="#1f4fd0" />
                <path d="M13 6h2c3 1 2 4 1 7-.5 2-1 3-3 3H8c3-2 2-9 5-10z" fill="#d35bc0" />
                <path d="M3 13h5c0 1 1 3 2 3H6c-2 0-2-1-3-3z" fill="#f0a23c" />
            </App16>
        ),
    },
    { label: "파일 탐색기", icon: <App16><path d="M1 3h6l2 2h8v11H1z" fill="#f0b429" /><path d="M1 7h16v9H1z" fill="#ffd45c" /><path d="M4 11h10v5H4z" fill="#2f8ed6" /></App16> },
    { label: "Edge", mark: "bg-[#666]", icon: <App16><circle cx="9" cy="9" r="8" fill="#1b78c8" /><path d="M2 6c3-6 13-6 15 2 0 4-5 4-6 2 1-4-5-6-9-4z" fill="#48c58a" /><circle cx="6" cy="13" r="4" fill="#9aa3ab" /><circle cx="6" cy="12" r="1.500" fill="#fff" /></App16> },
    { label: "Chrome", icon: <App16><circle cx="9" cy="9" r="8" fill="#2ba24c" /><path d="M9 9 2 5a8 8 0 0 1 14 0z" fill="#e33b2e" /><path d="M9 9l7-4a8 8 0 0 1-7 12z" fill="#fcc934" /><circle cx="9" cy="9" r="4" fill="#fff" /><circle cx="9" cy="9" r="3" fill="#3b78e7" /></App16> },
    { label: "TradingView", cls: "bg-white/70", mark: "bg-[#d9702b]", icon: <App16><rect x="1" y="1" width="16" height="16" rx="3" fill="#111" /><g transform="translate(3 6) scale(.42)" fill="#fff"><TvMark /></g></App16> },
    { label: "웨일", icon: <App16><path d="M2 8c1-6 8-8 14-5-1 3 0 8-3 11-5 3-11 0-11-6z" fill="#173a8c" /><path d="M16 7c1 5-2 9-6 9-4 0-6-1-7-4 5 0 7-4 13-5z" fill="#30c7b5" /><path d="M3 12c2 2 5 2 7 4-4 1-7-1-7-4z" fill="#d8eef5" /></App16> },
    { label: "캡처", icon: <App16><path d="M3 3h9v8H3z" fill="#fff" stroke="#e0502e" strokeWidth="2" strokeDasharray="2 1" /><path d="M12 6v8M8 11h7" stroke="#4a5a68" strokeWidth="1.500" /><circle cx="10" cy="14" r="2" fill="none" stroke="#2f9fe0" strokeWidth="1.500" /><circle cx="15" cy="12" r="2" fill="none" stroke="#2f9fe0" strokeWidth="1.500" /></App16> },
    { label: "Vivaldi", icon: <App16><rect x="1" y="1" width="16" height="16" rx="4" fill="#ef3939" /><circle cx="9" cy="9" r="6" fill="#fff" /><path d="M6.500 7 9 12l2.500-5" stroke="#ef3939" strokeWidth="2" fill="none" strokeLinecap="round" /></App16> },
    { label: "증권", icon: <App16><path d="M2 2l5 13M5 2l5 13" stroke="#e0633a" strokeWidth="1.500" /><path d="M8 2l4 12M16 2l-4 12" stroke="#8a93a0" strokeWidth="1.500" /><path d="M13 2l-2 8" stroke="#d9483a" strokeWidth="1.500" /></App16> },
];

const Taskbar = () => (
    <footer className="flex h-[30px] shrink-0 items-center justify-between border-t border-[#cfd6e2] bg-gradient-to-r from-[#e3ecf8] via-[#d6def2] to-[#e2ecf9] text-[#3c4450]">
        <button className="flex flex-1 items-center gap-px pl-3 text-left text-[8px] leading-[10px]">
            <svg width="18" height="20" viewBox="0 0 18 20" aria-hidden="true">
                <circle cx="5" cy="12" r="3" fill="#f2b13a" />
                <path d="M2 15c0-4 5-5 7-2 3-1 6 0 6 3H3z" fill="#b8c8e8" />
                <path d="M8 14h4l-1 4-2-1z" fill="#2f7be0" />
                <circle cx="11" cy="6" r="5" fill="#c93c34" />
                <text x="8" y="8" fill="#fff" className="text-[6px] font-bold">9+</text>
            </svg>
            <span>15°C<br />비 약간</span>
        </button>
        <div className="flex items-center pl-1">
            <button aria-label="시작" className="mr-2 flex w-4 justify-center">
                <svg width="15" height="15" viewBox="0 0 15 15" fill="#1a84d8" aria-hidden="true"><path d="M0 0h7v7H0zM8 0h7v7H8zM0 8h7v7H0zM8 8h7v7H8z" /></svg>
            </button>
            <label className="flex h-5 w-[136px] items-center gap-[6px] rounded-full bg-white pl-[6px]">
                <Search size={11} strokeWidth={2} />
                <input aria-label="검색" placeholder="검색" className="w-[76px] bg-transparent text-[13px] placeholder:text-[#555] focus:outline-none" />
                <svg width="30" height="16" viewBox="0 0 30 16" aria-hidden="true">
                    <circle cx="5" cy="5" r="4" fill="#f2e6e6" stroke="#c94a4a" strokeDasharray="2 1" />
                    <path d="M8 15 20 1l3 2L10 16z" fill="#d99b4a" />
                    <path d="M21 9c2-5 7-4 8 1 0 4-3 6-6 5z" fill="#a9692c" />
                </svg>
            </label>
            {TASKS.map((t) => (
                <button key={t.label} aria-label={t.label} className={`relative flex h-6 w-7 items-center justify-center rounded ${t.cls ?? ""}`}>
                    {t.icon}
                    {t.mark && <span className={`absolute -bottom-0.5 h-[2px] w-2 rounded ${t.mark}`} />}
                </button>
            ))}
            <button aria-label="카카오톡" className="relative flex size-[25px] items-center justify-center rounded bg-[#f0aaa6]">
                <App16><rect x="1" y="1" width="16" height="16" rx="3" fill="#fbe300" /><ellipse cx="9" cy="8.500" rx="6" ry="5" fill="#3b1e1e" /><path d="M6 12v4l3-3z" fill="#3b1e1e" /><text x="4" y="10" fill="#fbe300" className="text-[4px] font-bold">TALK</text></App16>
                <span className="absolute bottom-0 h-[2px] w-5 bg-[#c93c34]" />
            </button>
        </div>
        <div className="flex flex-1 items-center justify-end gap-[6px] pr-3">
            <ChevronUp size={10} />
            <Ico size={11} sw={2}><rect x="2" y="3" width="20" height="18" rx="2" /><path d="M2 14h20M9 14v3h6v-3" /></Ico>
            <span className="mx-1 text-[10px]">가</span>
            <Wifi size={11} />
            <Volume2 size={12} />
            <p className="text-right text-[8px] leading-[10px]">오후 9:49<br />2025-10-23</p>
        </div>
    </footer>
);

export default function App() {
    return (
        <div className={`flex h-screen w-full flex-col overflow-hidden bg-[#ebebeb] ${FONT}`}>
            <TitleBar />
            <TopToolbar />
            <div className="flex min-h-0 flex-1">
                <DrawingBar />
                <main className="ml-1 flex min-w-0 flex-1 flex-col">
                    <ChartArea />
                    <RangeBar />
                    <BottomPanel />
                </main>
                <ObjectTree />
                <WidgetBar />
            </div>
            <Taskbar />
        </div>
    );
}
